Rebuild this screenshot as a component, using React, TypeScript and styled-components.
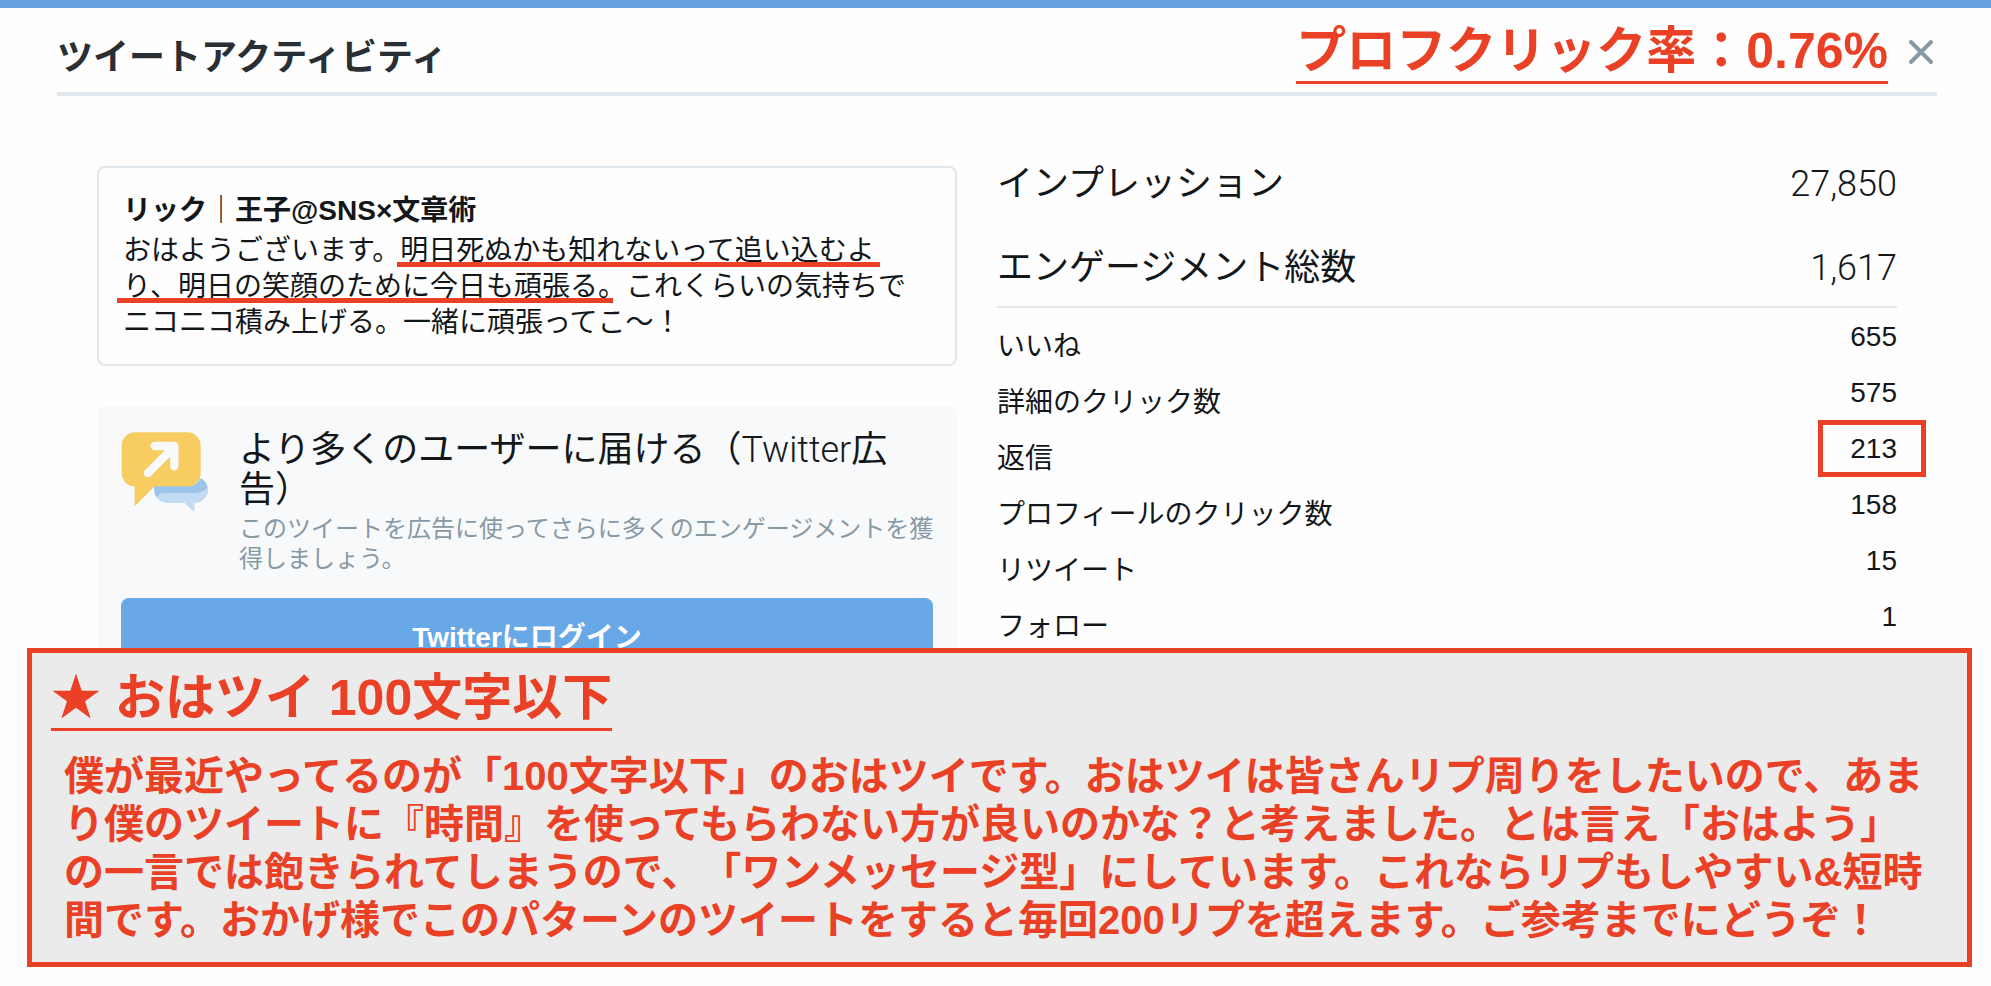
import React from 'react';
import styled, { createGlobalStyle } from 'styled-components';

const red = '#ea4025';
const line = '#e1e8ed';
const grey = '#8899a6';

const GlobalStyle = createGlobalStyle`
  *, *::before, *::after { box-sizing: border-box; }
  body {
    margin: 0;
    background: #fefefe;
    color: #14171a;
    font-family: "Liberation Sans", "Noto Sans CJK JP", sans-serif;
    font-size: 28px;
    line-height: 36px;
    text-spacing-trim: space-all;
  }
  h1, h2, h3, p { margin: 0; }
`;

const Page = styled.div`
  border-top: 8px solid #68a2e0;
  padding-bottom: 19px;
`;

const Header = styled.header`
  display: flex;
  align-items: center;
  height: 88px;
  margin: 0 54px 0 57px;
  border-bottom: 4px solid ${line};
`;

const Title = styled.h1`
  flex: 1;
  padding-top: 16px;
  color: #292f33;
  font-size: 36px;
  line-height: 40px;
`;

const Callout = styled.strong`
  display: inline-block;
  padding-top: 4px;
  border-bottom: 3px solid ${red};
  color: ${red};
  font-size: 50px;
  line-height: 60px;
`;

const CloseButton = styled.button`
  display: flex;
  margin: 4px 0 0 14px;
  padding: 6px 3px 6px 6px;
  border: 0;
  background: none;
  color: ${grey};
  cursor: pointer;
`;

const Columns = styled.main`
  display: grid;
  grid-template-columns: 43fr 45fr;
  gap: 40px;
  padding: 50px 94px 0 97px;
`;

const LeftColumn = styled.div`
  display: flex;
  flex-direction: column;
  gap: 40px;
  padding-top: 20px;
`;

const TweetCard = styled.article`
  padding: 25px 32px 23px 24px;
  border: 2px solid ${line};
  border-radius: 8px;
`;

const Author = styled.h2`
  margin-bottom: 4px;
  font-size: 28px;
  line-height: 36px;
`;

const Underlined = styled.span<{ $start: number; $end: number }>`
  position: relative;
  &::after {
    content: "";
    position: absolute;
    left: ${(p) => p.$start}px;
    right: ${(p) => p.$end}px;
    bottom: -1px;
    height: 5px;
    background: ${red};
  }
`;

const PromoCard = styled.section`
  padding: 24px 20px 24px 24px;
  border-radius: 8px;
  background: #f7f9fb;
`;

const PromoBody = styled.div`
  display: flex;
  gap: 31px;
  margin-bottom: 24px;
`;

const PromoIcon = styled.svg`
  flex: none;
  width: 87px;
  height: 83px;
  margin-top: 1px;
`;

const PromoTitle = styled.h3`
  margin-bottom: 4px;
  font-size: 36px;
  font-weight: 400;
  line-height: 40px;
`;

const Thin = styled.span`
  font-family: Roboto, "Liberation Sans", sans-serif;
  font-weight: 300;
`;

const PromoText = styled.p`
  color: ${grey};
  font-size: 24px;
  line-height: 30px;
`;

const LoginArea = styled.div`
  padding-right: 4px;
`;

const LoginButton = styled.button`
  display: block;
  width: 100%;
  height: 80px;
  border: 0;
  border-radius: 8px;
  background: #69a8e7;
  color: #fff;
  font: inherit;
  font-weight: 700;
  cursor: pointer;
`;

const Metrics = styled.div`
  min-width: 0;
`;

const MetricTable = styled.table`
  width: 100%;
  border-collapse: collapse;
  th, td { padding: 0; font-weight: 400; vertical-align: top; }
  th { text-align: left; }
  td { text-align: right; }
`;

const TotalTable = styled(MetricTable)`
  border-bottom: 2px solid ${line};
  font-size: 36px;
  line-height: 76px;
  tr:not(:last-child) > * { padding-bottom: 8px; }
`;

const DetailTable = styled(MetricTable)`
  th { padding-top: 22px; line-height: 34px; }
  td { padding-top: 2px; line-height: 54px; }
`;

const Boxed = styled.span`
  position: relative;
  &::after {
    content: "";
    position: absolute;
    inset: -13px -29px -13px -32px;
    border: 5px solid ${red};
  }
`;

const Note = styled.aside`
  position: relative;
  margin: -54px 19px 0 27px;
  padding: 11px 29px 18px 19px;
  border: 5px solid ${red};
  background: #ebebeb;
  color: ${red};
  font-weight: 700;
`;

const NoteText = styled.p`
  padding: 21px 0 0 13px;
  font-size: 40px;
  line-height: 48px;
`;

const totals = [
  { label: 'インプレッション', value: '27,850' },
  { label: 'エンゲージメント総数', value: '1,617' },
];

const details = [
  { label: 'いいね', value: '655' },
  { label: '詳細のクリック数', value: '575' },
  { label: '返信', value: '213', boxed: true },
  { label: 'プロフィールのクリック数', value: '158' },
  { label: 'リツイート', value: '15' },
  { label: 'フォロー', value: '1' },
];

export default function App() {
  return (
    <>
      <GlobalStyle />
      <Page>
        <Header>
          <Title>ツイートアクティビティ</Title>
          <Callout>プロフクリック率：0.76%</Callout>
          <CloseButton type="button" aria-label="閉じる">
            <svg width="26" height="26" viewBox="0 0 26 26" stroke="currentColor" strokeWidth="4" strokeLinecap="round">
              <path d="M3 3L23 23M23 3L3 23" />
            </svg>
          </CloseButton>
        </Header>
        <Columns>
          <LeftColumn>
            <TweetCard>
              <Author>リック｜王子@SNS×文章術</Author>
              <p>
                おはようございます。
                <Underlined $start={-3} $end={-5}>明日死ぬかも知れないって追い込むよ</Underlined>
                <Underlined $start={-6} $end={13}>り、明日の笑顔のために今日も頑張る。</Underlined>
                これくらいの気持ちでニコニコ積み上げる。一緒に頑張ってこ〜！
              </p>
            </TweetCard>
            <PromoCard>
              <PromoBody>
                <PromoIcon viewBox="93 120 261 249" aria-hidden="true">
                  <path d="M234 258H306A45 39 0 0 1 313 336V364L284 336H234A42 39 0 0 1 234 258Z" fill="#c0dbf2" />
                  <path d="M193 286H290Q322 286 333 262Q352 274 351 290Q338 306 310 306H222Q208 306 201 319Q190 304 193 286Z" fill="#9bc5e8" />
                  <path d="M135 124H292A40 40 0 0 1 332 164V246A40 40 0 0 1 292 286H194L134 346V286A39 40 0 0 1 95 246V164A40 40 0 0 1 135 124Z" fill="#f7cd62" />
                  <path d="M174 246L250 170M194 165H253V226" fill="none" stroke="#f7f9fb" strokeWidth="25" strokeLinecap="round" strokeLinejoin="round" />
                </PromoIcon>
                <div>
                  <PromoTitle>
                    より多くのユーザーに届ける（<Thin>Twitter</Thin>広告）
                  </PromoTitle>
                  <PromoText>このツイートを広告に使ってさらに多くのエンゲージメントを獲得しましょう。</PromoText>
                </div>
              </PromoBody>
              <LoginArea>
                <LoginButton type="button">Twitterにログイン</LoginButton>
              </LoginArea>
            </PromoCard>
          </LeftColumn>
          <Metrics>
            <TotalTable>
              <tbody>
                {totals.map((m) => (
                  <tr key={m.label}>
                    <th scope="row">{m.label}</th>
                    <td><Thin>{m.value}</Thin></td>
                  </tr>
                ))}
              </tbody>
            </TotalTable>
            <DetailTable>
              <tbody>
                {details.map((m) => (
                  <tr key={m.label}>
                    <th scope="row">{m.label}</th>
                    <td>{m.boxed ? <Boxed>{m.value}</Boxed> : m.value}</td>
                  </tr>
                ))}
              </tbody>
            </DetailTable>
          </Metrics>
        </Columns>
        <Note>
          <Callout as="h2">★ おはツイ 100文字以下</Callout>
          <NoteText>
            僕が最近やってるのが「100文字以下」のおはツイです。おはツイは皆さんリプ周りをしたいので、あまり僕のツイートに『時間』を使ってもらわない方が良いのかな？と考えました。とは言え「おはよう」の一言では飽きられてしまうので、「ワンメッセージ型」にしています。これならリプもしやすい&amp;短時間です。おかげ様でこのパターンのツイートをすると毎回200リプを超えます。ご参考までにどうぞ！
          </NoteText>
        </Note>
      </Page>
    </>
  );
}
